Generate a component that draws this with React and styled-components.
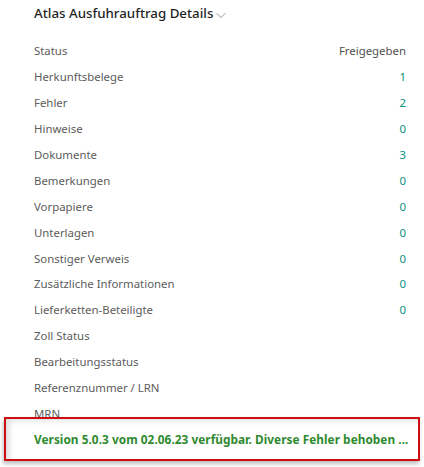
import React from 'react';
import styled, { createGlobalStyle } from 'styled-components';

const GlobalStyle = createGlobalStyle`
  html, body {
    margin: 0;
    padding: 0;
    background: #ffffff;
  }
  body {
    font-family: "Noto Sans", "Open Sans", sans-serif;
  }
`;

const Page = styled.div`
  position: relative;
  width: 424px;
  height: 467px;
  overflow: hidden;
  background: #ffffff;
`;

const Panel = styled.div`
  padding: 0 18px 0 34px;
`;

const Header = styled.div`
  display: flex;
  align-items: center;
  height: 26px;
  margin-bottom: 12px;
`;

const Title = styled.h2`
  margin: 0;
  font-size: 13.3px;
  font-weight: 500;
  color: #1f1f1f;
`;

const Chevron = styled.svg`
  width: 14px;
  height: 14px;
  margin-left: 1px;
  margin-top: 3px;
`;

const Rows = styled.div`
  display: flex;
  flex-direction: column;
`;

const Row = styled.div`
  display: flex;
  align-items: center;
  justify-content: space-between;
  height: 25.9px;
  font-size: 11.4px;
`;

const Label = styled.span`
  color: #5c5c5c;
`;

const Value = styled.span`
  color: ${p => (p.$plain ? '#505050' : '#0a8f84')};
`;

const Notice = styled.div`
  position: absolute;
  left: 4px;
  top: 417px;
  width: 416px;
  height: 44px;
  box-sizing: border-box;
  display: flex;
  align-items: center;
  padding-left: 28px;
  background: #ffffff;
  border: 2px solid #cc0d12;
  box-shadow: inset 6px 4px 6px -3px rgba(0, 0, 0, 0.15), -1px 3px 4px rgba(0, 0, 0, 0.25);
`;

const NoticeText = styled.span`
  font-size: 11.8px;
  font-weight: 700;
  letter-spacing: 0.05px;
  color: #2f8a2f;
  white-space: nowrap;
`;

const rows = [
  ['Status', 'Freigegeben', true],
  ['Herkunftsbelege', '1'],
  ['Fehler', '2'],
  ['Hinweise', '0'],
  ['Dokumente', '3'],
  ['Bemerkungen', '0'],
  ['Vorpapiere', '0'],
  ['Unterlagen', '0'],
  ['Sonstiger Verweis', '0'],
  ['Zusätzliche Informationen', '0'],
  ['Lieferketten-Beteiligte', '0'],
  ['Zoll Status', ''],
  ['Bearbeitungsstatus', ''],
  ['Referenznummer / LRN', ''],
  ['MRN', ''],
];

const App = () => {
  return (
    <Page>
      <GlobalStyle />
      <Panel>
        <Header>
          <Title>Atlas Ausfuhrauftrag Details</Title>
          <Chevron viewBox="0 0 16 16" fill="none" stroke="#8a8a8a" strokeWidth="1">
            <path d="M3 6l5 5 5-5" />
          </Chevron>
        </Header>
        <Rows>
          {rows.map(([label, value, plain]) => (
            <Row key={label}>
              <Label>{label}</Label>
              <Value $plain={plain}>{value}</Value>
            </Row>
          ))}
        </Rows>
      </Panel>
      <Notice>
        <NoticeText>Version 5.0.3 vom 02.06.23 verfügbar. Diverse Fehler behoben ...</NoticeText>
      </Notice>
    </Page>
  );
};

export default App;
